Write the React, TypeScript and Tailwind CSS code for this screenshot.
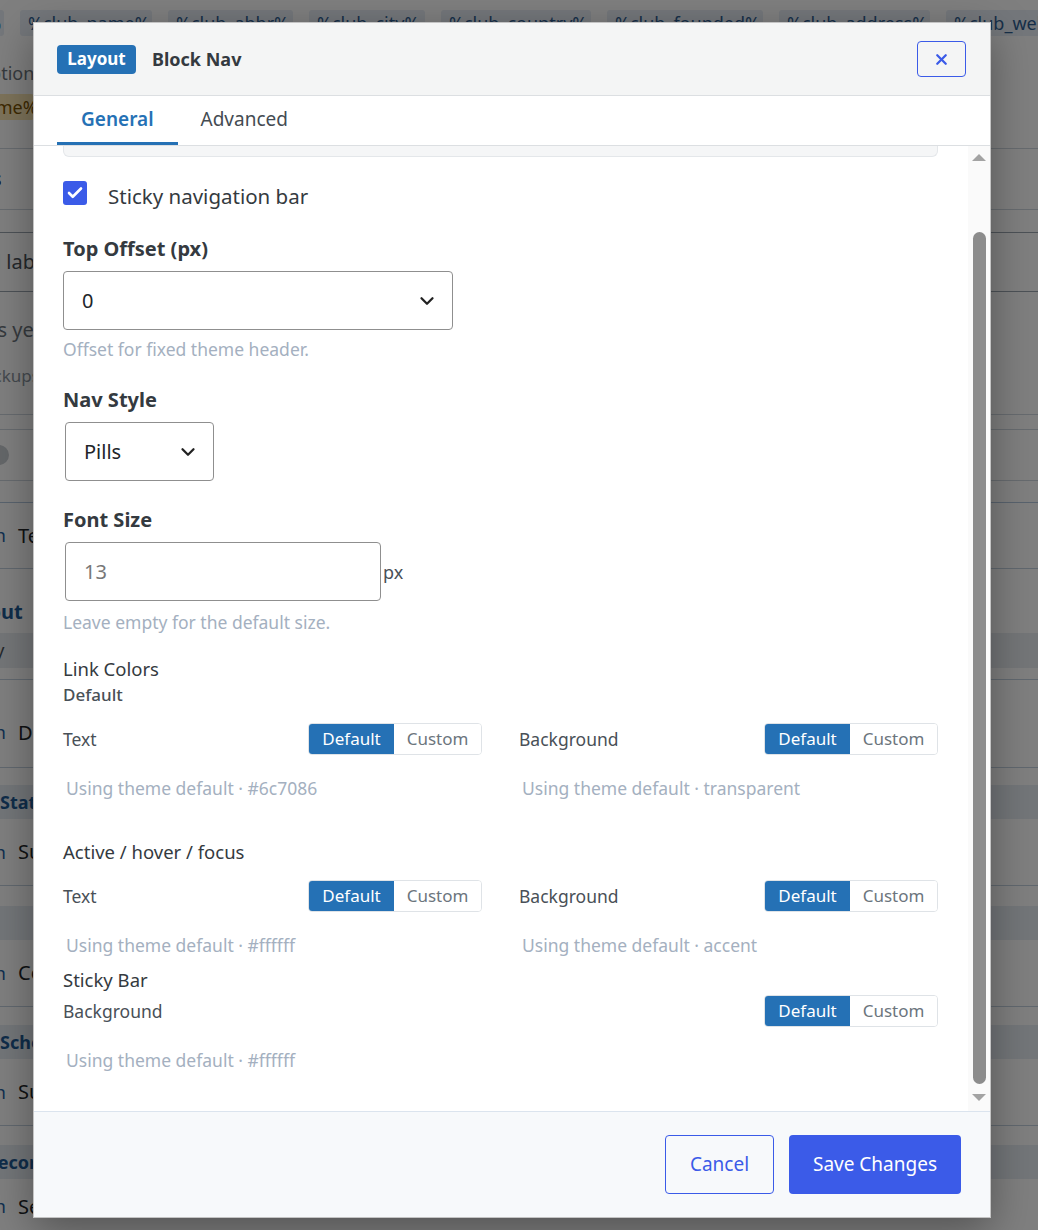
import { Check, ChevronDown, X } from "lucide-react";

const tags = [
  { text: "%club_id%", cls: "w-[100px] -ml-[96px]" },
  { text: "%club_name%", cls: "w-[132px]" },
  { text: "%club_abbr%", cls: "w-[125px]" },
  { text: "%club_city%", cls: "w-[116px]" },
  { text: "%club_country%", cls: "w-[150px]" },
  { text: "%club_founded%", cls: "w-[156px]" },
  { text: "%club_address%", cls: "w-[151px]" },
  { text: "%club_website%", cls: "w-[150px]" },
];

// one row of the blocks table behind the dialog
function BlockRow({ icon, title, cls }: { icon: string; title: string; cls: string }) {
  return (
    <div className={`flex items-center border-b border-[#c3d0df] ${cls}`}>
      <span className="-ml-[40px] w-[46px] text-right text-[18px] text-[#1f5fa0]">{icon}</span>
      <span className="ml-[12px] text-[20px] text-[#212529]">{title}</span>
    </div>
  );
}

function SectionBand({ title, cls }: { title: string; cls: string }) {
  return (
    <div className={`flex items-center h-[34px] bg-[#e6ecf3] ${cls}`}>
      <span className="text-[18px] font-bold text-[#1f5a94]">{title}</span>
    </div>
  );
}

function BackdropPage() {
  return (
    <div className="w-full text-[#212529]">
      <div className="flex gap-[16px] pt-[10px] h-[46px] whitespace-nowrap">
        {tags.map((t) => (
          <span
            key={t.text}
            className={`shrink-0 h-[26px] flex items-center px-[8px] rounded-[3px] bg-[#e8eef6] text-[18px] text-[#2f5f93] ${t.cls}`}
          >
            {t.text}
          </span>
        ))}
      </div>
      <div className="h-[102px] pt-[14px]">
        <div className="-ml-[24px] text-[18px] leading-[26px] text-[#6c757d]">Optional placeholders</div>
        <div className="mt-[8px] -ml-[100px] w-[134px] h-[26px] flex items-center px-[8px] rounded-[3px] bg-[#fbe7b5] text-[18px] text-[#7a5200] whitespace-nowrap">
          %team_name%
        </div>
      </div>
      <div className="h-[61px] border-t border-[#cfd6de] flex items-center">
        <span className="-ml-[56px] text-[20px] font-bold">Fields</span>
      </div>
      <div className="h-[23px] border-t border-[#cfd6de]" />
      <div className="h-[59px] border-t border-[#9aa4ae] flex items-center">
        <span className="-ml-[22px] text-[20px] text-[#495057]">All labels</span>
      </div>
      <div className="h-[123px] border-t border-[#9aa4ae] pt-[24px] whitespace-nowrap">
        <div className="-ml-[92px] text-[20px] leading-[28px] text-[#6c757d]">No groups yet</div>
        <div className="mt-[20px] -ml-[27px] text-[17px] leading-[24px] text-[#8a949e]">Backups</div>
      </div>
      <div className="h-[15px] border-t border-[#cfd6de]" />
      <div className="h-[51px] border-t border-[#cfd6de] flex items-center">
        <span className="-ml-[11px] w-[20px] h-[20px] rounded-full bg-[#c9ced3]" />
      </div>
      <div className="h-[22px] border-t border-[#cfd6de]" />
      <BlockRow icon="Icon" title="Text" cls="h-[67px] border-t border-t-[#b3c6dc]" />
      <div className="h-[64px] flex items-end pb-[6px]">
        <span className="-ml-[46px] text-[20px] font-bold text-[#1f5a94]">Layout</span>
      </div>
      <div className="h-[35px] bg-[#e9edf1] flex items-center">
        <span className="-ml-[44px] text-[18px] text-[#495057]">Sticky</span>
      </div>
      <div className="h-[12px] border-b border-[#c3d0df]" />
      <BlockRow icon="Icon" title="Divider" cls="h-[88px] pt-[18px]" />
      <div className="h-[17px]" />
      <SectionBand title="Stats" cls="" />
      <BlockRow icon="Icon" title="Summary" cls="h-[67px]" />
      <div className="h-[20px]" />
      <SectionBand title="" cls="" />
      <BlockRow icon="Icon" title="Contact" cls="h-[67px]" />
      <div className="h-[18px]" />
      <SectionBand title="Schedule" cls="" />
      <BlockRow icon="Icon" title="Summary" cls="h-[67px]" />
      <div className="h-[19px]" />
      <SectionBand title="Records" cls="-ml-[14px]" />
      <BlockRow icon="Icon" title="Season" cls="h-[60px] pb-[4px]" />
    </div>
  );
}

function ColorToggle() {
  return (
    <div className="flex h-[32px] rounded-[4px] border border-[#dfe3e7] overflow-hidden text-[17px]">
      <button className="w-[85px] bg-[#2571b5] text-white">Default</button>
      <button className="w-[87px] bg-white text-[#6c757d]">Custom</button>
    </div>
  );
}

function ColorField({ label, hint }: { label: string; hint: string }) {
  return (
    <div>
      <div className="flex items-center justify-between h-[32px]">
        <span className="text-[17.5px] text-[#495057]">{label}</span>
        <ColorToggle />
      </div>
      <div className="mt-[21px] ml-[3px] text-[17.5px] leading-[24px] text-[#a4b0c0]">{hint}</div>
    </div>
  );
}

function SelectBox({ value, cls }: { value: string; cls: string }) {
  return (
    <div
      className={`h-[59px] flex items-center justify-between rounded-[4px] border border-[#8f8f8f] pl-[18px] pr-[14px] text-[20px] text-[#212529] ${cls}`}
    >
      <span>{value}</span>
      <ChevronDown size={22} strokeWidth={2.5} className="text-[#222]" />
    </div>
  );
}

function Scrollbar() {
  return (
    <div className="w-[22px] bg-[#fafafa] flex flex-col items-center pt-[8px]">
      <svg width="14" height="7" viewBox="0 0 14 7">
        <polygon points="7,0 14,7 0,7" fill="#a3a3a3" />
      </svg>
      <div className="mt-[71px] w-[13px] h-[852px] rounded-full bg-[#8c8c8c]" />
      <svg width="14" height="7" viewBox="0 0 14 7" className="mt-[10px]">
        <polygon points="0,0 14,0 7,7" fill="#a3a3a3" />
      </svg>
    </div>
  );
}

function BlockNavDialog() {
  return (
    <div className="absolute left-[33px] top-[22px] w-[958px] h-[1196px] flex flex-col bg-white border border-[#c4c4c4] shadow-[0_12px_40px_rgba(0,0,0,0.35)]">
      <div className="h-[73px] shrink-0 flex items-center justify-between bg-[#f4f5f5] border-b border-[#dcdfe2] pl-[23px] pr-[24px]">
        <div className="flex items-center">
          <span className="h-[29px] w-[79px] flex items-center justify-center rounded-[4px] bg-[#2571b5] text-white text-[17px] font-bold">
            Layout
          </span>
          <span className="ml-[16px] text-[18px] font-bold text-[#343a40]">Block Nav</span>
        </div>
        <button className="w-[49px] h-[36px] flex items-center justify-center rounded-[4px] border border-[#3b5be8] text-[#3b5be8]">
          <X size={17} strokeWidth={3.2} />
        </button>
      </div>

      <div className="h-[50px] shrink-0 flex items-stretch border-b border-[#dcdfe2] pl-[23px]">
        <div className="flex items-center px-[24px] border-b-[3px] border-[#2571b5] text-[19px] font-semibold text-[#2571b5]">
          General
        </div>
        <div className="flex items-center px-[23px] border-b-[3px] border-transparent text-[19px] text-[#444b52]">
          Advanced
        </div>
      </div>

      <div className="flex-1 min-h-0 flex">
        <div className="w-[875px] ml-[29px] mr-[30px]">
          <div className="h-[11px] rounded-b-[6px] border border-t-0 border-[#e4e7ea] bg-[#f5f6f7]" />

          <label className="mt-[24px] h-[24px] flex items-center">
            <span className="w-[24px] h-[24px] rounded-[3px] bg-[#3b5be8] flex items-center justify-center">
              <Check size={18} strokeWidth={3.5} className="text-white" />
            </span>
            <span className="ml-[21px] pt-[7px] text-[20.5px] text-[#343a40]">Sticky navigation bar</span>
          </label>

          <div className="mt-[30px] text-[20px] leading-[28px] font-bold text-[#343a40]">Top Offset (px)</div>
          <SelectBox value="0" cls="mt-[8px] w-[390px]" />
          <div className="mt-[7px] text-[17.5px] leading-[24px] text-[#a4b0c0]">Offset for fixed theme header.</div>

          <div className="mt-[25px] text-[20px] leading-[28px] font-bold text-[#343a40]">Nav Style</div>
          <SelectBox value="Pills" cls="mt-[8px] ml-[2px] w-[149px]" />

          <div className="mt-[25px] text-[20px] leading-[28px] font-bold text-[#343a40]">Font Size</div>
          <div className="mt-[8px] flex items-center">
            <div className="ml-[2px] w-[316px] h-[59px] flex items-center rounded-[4px] border border-[#8f8f8f] pl-[18px] text-[20px] text-[#777]">
              13
            </div>
            <span className="ml-[2px] pt-[2px] text-[18px] text-[#495057]">px</span>
          </div>
          <div className="mt-[9px] text-[17.5px] leading-[24px] text-[#a4b0c0]">Leave empty for the default size.</div>

          <div className="mt-[22px] text-[18.5px] leading-[26px] text-[#343a40]">Link Colors</div>
          <div className="mt-[1px] text-[17px] leading-[24px] font-medium text-[#495057]">Default</div>
          <div className="mt-[16px] grid grid-cols-2 gap-x-[37px]">
            <ColorField label="Text" hint="Using theme default · #6c7086" />
            <ColorField label="Background" hint="Using theme default · transparent" />
          </div>

          <div className="mt-[39px] text-[18.5px] leading-[26px] text-[#343a40]">Active / hover / focus</div>
          <div className="mt-[15px] grid grid-cols-2 gap-x-[37px]">
            <ColorField label="Text" hint="Using theme default · #ffffff" />
            <ColorField label="Background" hint="Using theme default · accent" />
          </div>

          <div className="mt-[10px] text-[18.5px] leading-[26px] text-[#343a40]">Sticky Bar</div>
          <div className="mt-[2px]">
            <ColorField label="Background" hint="Using theme default · #ffffff" />
          </div>
        </div>
        <Scrollbar />
      </div>

      <div className="h-[106px] shrink-0 flex items-center justify-end gap-[15px] pr-[29px] bg-[#f7f9fb] border-t border-[#dbe4ee]">
        <button className="w-[109px] h-[59px] rounded-[4px] border border-[#3b5be8] text-[19px] text-[#3b5be8]">
          Cancel
        </button>
        <button className="w-[172px] h-[59px] rounded-[4px] bg-[#3b5be8] text-[19px] text-white">Save Changes</button>
      </div>
    </div>
  );
}

export default function App() {
  return (
    <div className="relative w-full h-[1230px] overflow-hidden bg-white font-['Noto_Sans',sans-serif]">
      <BackdropPage />
      <div className="absolute inset-0 bg-black/50" />
      <BlockNavDialog />
    </div>
  );
}
